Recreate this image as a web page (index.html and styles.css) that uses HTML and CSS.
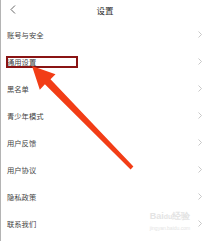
FILE: index.html
```html
<!DOCTYPE html>
<html lang="zh">
<head>
<meta charset="utf-8">
<link rel="stylesheet" href="styles.css">
</head>
<body>
<div class="page">
  <header class="bar">
    <svg class="back" width="6" height="9" viewBox="0 0 6 9"><polyline points="5,0.5 1,4.5 5,8.5" fill="none" stroke="#555" stroke-width="0.9"/></svg>
    <div class="title">设置</div>
  </header>
  <ul class="list">
    <li class="row"><span>账号与安全</span><svg class="chev" width="4" height="7" viewBox="0 0 4 7"><polyline points="0.5,0.5 3.5,3.5 0.5,6.5" fill="none" stroke="#bbb" stroke-width="0.8"/></svg></li>
    <li class="row"><span>通用设置</span><svg class="chev" width="4" height="7" viewBox="0 0 4 7"><polyline points="0.5,0.5 3.5,3.5 0.5,6.5" fill="none" stroke="#bbb" stroke-width="0.8"/></svg></li>
    <li class="row"><span>黑名单</span><svg class="chev" width="4" height="7" viewBox="0 0 4 7"><polyline points="0.5,0.5 3.5,3.5 0.5,6.5" fill="none" stroke="#bbb" stroke-width="0.8"/></svg></li>
    <li class="row"><span>青少年模式</span><svg class="chev" width="4" height="7" viewBox="0 0 4 7"><polyline points="0.5,0.5 3.5,3.5 0.5,6.5" fill="none" stroke="#bbb" stroke-width="0.8"/></svg></li>
    <li class="row"><span>用户反馈</span><svg class="chev" width="4" height="7" viewBox="0 0 4 7"><polyline points="0.5,0.5 3.5,3.5 0.5,6.5" fill="none" stroke="#bbb" stroke-width="0.8"/></svg></li>
    <li class="row"><span>用户协议</span><svg class="chev" width="4" height="7" viewBox="0 0 4 7"><polyline points="0.5,0.5 3.5,3.5 0.5,6.5" fill="none" stroke="#bbb" stroke-width="0.8"/></svg></li>
    <li class="row"><span>隐私政策</span><svg class="chev" width="4" height="7" viewBox="0 0 4 7"><polyline points="0.5,0.5 3.5,3.5 0.5,6.5" fill="none" stroke="#bbb" stroke-width="0.8"/></svg></li>
    <li class="row"><span>联系我们</span><svg class="chev" width="4" height="7" viewBox="0 0 4 7"><polyline points="0.5,0.5 3.5,3.5 0.5,6.5" fill="none" stroke="#bbb" stroke-width="0.8"/></svg></li>
  </ul>
  <div class="mark">
    <div class="mark-logo">Bai<span class="paw">du</span>经验</div>
    <div class="mark-url">jingyan.baidu.com</div>
  </div>
  <div class="highlight"></div>
  <svg class="arrow" width="209" height="241" viewBox="0 0 209 241">
    <polygon fill="#f23d16" points="32,66 55.5,74.2 50.5,79.3 133.4,166.6 130.6,169.4 44.9,84.2 39.8,89.7"/>
  </svg>
</div>
</body>
</html>
```
FILE: styles.css
```css
html, body {
  margin: 0;
  padding: 0;
  background: #fff;
}
.page {
  position: relative;
  width: 208px;
  height: 241px;
  border-left: 1px solid #b4b4b4;
  overflow: hidden;
  font-family: "Noto Sans CJK SC", "Noto Sans", sans-serif;
  color: #333;
}
.bar {
  height: 21px;
  position: relative;
  display: flex;
  align-items: center;
  justify-content: center;
}
.back {
  position: absolute;
  left: 9px;
  top: 5px;
}
.title {
  font-size: 8.5px;
  color: #2a2a2a;
  line-height: 1;
  margin-top: -1px;
}
.list {
  list-style: none;
  margin: 0;
  padding: 0;
}
.row {
  height: 27px;
  display: flex;
  align-items: center;
  justify-content: space-between;
  padding: 0 7px 0 6px;
  font-size: 7.3px;
  color: #444;
}
.chev {
  display: block;
}
.mark {
  position: absolute;
  left: 143px;
  top: 211px;
  width: 52px;
  text-align: center;
  color: #e4e4e4;
  font-family: "Liberation Sans", sans-serif;
}
.mark-logo {
  font-size: 9px;
  font-weight: bold;
  line-height: 11px;
}
.paw {
  font-size: 7px;
}
.mark-url {
  font-size: 5px;
  line-height: 7px;
  margin-top: 3px;
}
.highlight {
  position: absolute;
  left: 5px;
  top: 56px;
  width: 68px;
  height: 8px;
  border: 2px solid #8a1414;
}
.arrow {
  position: absolute;
  left: -1px;
  top: 0;
}
```
